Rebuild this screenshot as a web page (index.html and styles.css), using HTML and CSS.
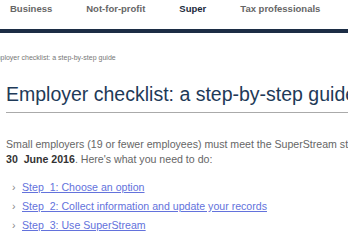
FILE: index.html
```html
<!DOCTYPE html>
<html lang="en">
<head>
    <meta charset="UTF-8">
    <meta name="viewport" content="width=device-width, initial-scale=1.0">
    <title>Employer checklist: a step-by-step guide</title>
    <link rel="stylesheet" href="styles.css">
</head>
<body>

    <!-- Top navigation -->
    <header class="top-nav">
        <a href="#">Business</a>
        <a href="#">Not-for-profit</a>
        <a href="#" class="active">Super</a>
        <a href="#">Tax professionals</a>
    </header>
    <div class="nav-line"></div>

    <main class="content">
        <p class="breadcrumb">Employer checklist: a step-by-step guide</p>
        <h1>Employer checklist: a step-by-step guide</h1>

        <p class="intro">Small employers (19 or fewer employees) must meet the SuperStream standard by<br><strong>30&nbsp; June 2016</strong>. Here's what you need to do:</p>

        <ul class="steps">
            <li><a href="#">Step&nbsp; 1: Choose an option</a></li>
            <li><a href="#">Step&nbsp; 2: Collect information and update your records</a></li>
            <li><a href="#">Step&nbsp; 3: Use SuperStream</a></li>
        </ul>
    </main>

</body>
</html>
```

FILE: styles.css
```css
body {
    font-family: "Liberation Sans", Arial, sans-serif;
    background-color: #fff;
    color: #666;
    margin: 0;
    overflow: hidden;
}
.top-nav {
    display: flex;
    gap: 34px;
    height: 26px;
    padding: 3px 0 0 10px;
}
.top-nav a {
    font-size: 9.5px;
    line-height: 12px;
    font-weight: bold;
    color: #666;
    text-decoration: none;
    white-space: nowrap;
}
.top-nav a.active {
    color: #1b2a3c;
}
.nav-line {
    height: 4px;
    background: #1c2d45;
}
.content {
    padding: 0 0 0 6px;
}
.breadcrumb {
    margin: 20px 0 0;
    font-size: 7px;
    line-height: 10px;
    text-indent: -16px;
    color: #777;
    white-space: nowrap;
}
h1 {
    margin: 19px 0 0;
    padding-bottom: 6px;
    font-size: 19.5px;
    line-height: 24px;
    font-weight: normal;
    color: #1e3a58;
    white-space: nowrap;
    border-bottom: 1px solid #aaa;
}
.intro {
    margin: 24px 0 0;
    font-size: 10.6px;
    line-height: 15px;
    white-space: nowrap;
}
.intro strong {
    color: #333;
}
.steps {
    list-style: none;
    margin: 11px 0 0;
    padding: 0 0 0 6px;
}
.steps li {
    font-size: 10.6px;
    line-height: 19px;
    white-space: nowrap;
}
.steps li::before {
    content: "›";
    display: inline-block;
    width: 10px;
    color: #888;
}
.steps a {
    color: #6372dc;
    text-decoration: underline;
}
```
